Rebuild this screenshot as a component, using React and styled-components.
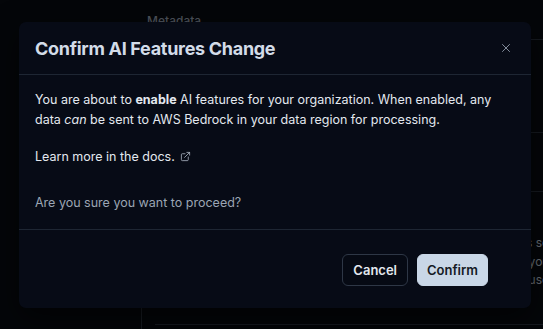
import styled, { createGlobalStyle } from "styled-components";
import { X, ExternalLink } from "lucide-react";

const GlobalStyle = createGlobalStyle`
  html, body {
    margin: 0;
    padding: 0;
    background: #040609;
    font-family: Inter, "Noto Sans", "Liberation Sans", sans-serif;
    -webkit-font-smoothing: antialiased;
  }
  * { box-sizing: border-box; }
`;

const Page = styled.div`
  position: relative;
  width: 543px;
  height: 329px;
  overflow: hidden;
  background: #040609;
`;

const Backdrop = styled.div`
  display: grid;
  grid-template-columns: 142px 1fr;
  height: 100%;
  opacity: 0.55;
`;

const Sidebar = styled.div`
  margin-top: 70px;
  border-right: 1px solid #2a2f38;
`;

const Main = styled.div`
  display: flex;
  flex-direction: column;
  padding-top: 13px;
  min-width: 0;
`;

const SectionTitle = styled.div`
  font-size: 12px;
  font-weight: 500;
  color: #8c95a3;
  padding-left: 5px;
  height: 18px;
`;

const Row = styled.div`
  height: ${(p) => p.h}px;
  margin-left: 13px;
  border-bottom: 1px solid #262b33;
  padding: ${(p) => p.pt || 0}px 0 0 300px;
  font-size: 12px;
  color: #b9c0cb;
  line-height: 18.5px;
  white-space: nowrap;
`;

const Modal = styled.div`
  position: absolute;
  left: 19px;
  top: 22px;
  width: 512px;
  background: #070b16;
  border-radius: 7px;
  box-shadow: 0 10px 30px rgba(0, 0, 0, 0.6);
  display: flex;
  flex-direction: column;
`;

const Header = styled.div`
  height: 53px;
  display: flex;
  align-items: center;
  justify-content: space-between;
  padding: 0 18px 0 16px;
  border-bottom: 1px solid #1e2633;
`;

const Title = styled.h2`
  margin: 0;
  font-size: 18px;
  font-weight: 700;
  letter-spacing: -0.3px;
  color: #d3dce8;
`;

const CloseButton = styled.button`
  background: none;
  border: none;
  padding: 0;
  color: #8d97a6;
  display: flex;
  cursor: pointer;
`;

const Body = styled.div`
  padding: 15px 16px 17px;
  border-bottom: 1px solid #1e2633;
`;

const Text = styled.p`
  margin: 0 0 ${(p) => p.gap || 0}px;
  font-size: 12.5px;
  line-height: 19.5px;
  color: ${(p) => (p.muted ? "#9ba5b3" : "#e3e8ef")};
  b { font-weight: 700; }
  em { font-style: italic; }
`;

const DocLink = styled.a`
  display: inline-flex;
  align-items: center;
  gap: 5px;
  color: #e3e8ef;
  text-decoration: none;
  svg { color: #aab3c0; }
`;

const Footer = styled.div`
  display: flex;
  justify-content: flex-end;
  gap: 9px;
  padding: 24px 43px 22px 16px;
`;

const Button = styled.button`
  height: 32px;
  padding: 0 ${(p) => (p.primary ? 9 : 10)}px;
  border-radius: 6px;
  font-family: inherit;
  font-size: 13px;
  font-weight: 600;
  cursor: pointer;
  border: 1px solid ${(p) => (p.primary ? "#c9d7e7" : "#2e3746")};
  background: ${(p) => (p.primary ? "#c9d7e7" : "#060a14")};
  color: ${(p) => (p.primary ? "#141a24" : "#e3e8ef")};
`;

export default function App() {
  return (
    <Page>
      <GlobalStyle />
      <Backdrop>
        <Sidebar />
        <Main>
          <SectionTitle>Metadata</SectionTitle>
          <Row h={9} />
          <Row h={93} />
          <Row h={59} />
          <Row h={133} pt={42}>
            <div>Information is sent to your data</div>
            <div>region when you request it and</div>
            <div>stored is not used for training.</div>
          </Row>
        </Main>
      </Backdrop>
      <Modal>
        <Header>
          <Title>Confirm AI Features Change</Title>
          <CloseButton aria-label="Close">
            <X size={14} strokeWidth={1.6} />
          </CloseButton>
        </Header>
        <Body>
          <Text gap={18}>
            You are about to <b>enable</b> AI features for your organization. When enabled, any
            data <em>can</em> be sent to AWS Bedrock in your data region for processing.
          </Text>
          <Text gap={26}>
            <DocLink href="#">
              Learn more in the docs.
              <ExternalLink size={11} strokeWidth={1.8} />
            </DocLink>
          </Text>
          <Text muted>Are you sure you want to proceed?</Text>
        </Body>
        <Footer>
          <Button>Cancel</Button>
          <Button primary>Confirm</Button>
        </Footer>
      </Modal>
    </Page>
  );
}
